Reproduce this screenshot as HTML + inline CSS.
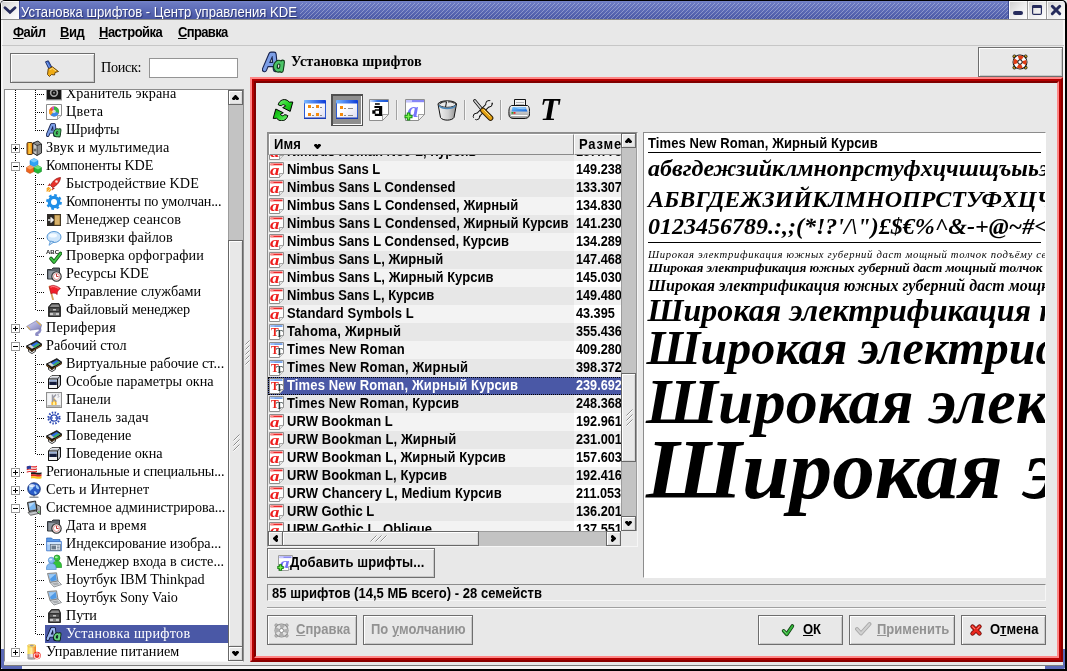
<!DOCTYPE html>
<html lang="ru"><head><meta charset="utf-8"><title>Установка шрифтов - Центр управления KDE</title>
<style>

*{box-sizing:border-box;margin:0;padding:0}
html,body{width:1067px;height:671px;overflow:hidden;background:#e8e8e8}
body{font-family:"Liberation Sans",sans-serif;color:#000;position:relative}
#win{position:absolute;left:0;top:0;width:1067px;height:671px;background:#e8e8e8;overflow:hidden;will-change:transform}
.abs{position:absolute}
.sans{font-family:"Liberation Sans",sans-serif}
.serif{font-family:"Liberation Serif",serif}
.b{font-weight:bold}
.nw{white-space:nowrap}
u{text-decoration:underline;text-underline-offset:1px}
/* title bar */
#tbar{left:1px;top:1px;width:1064px;height:18px;background:linear-gradient(#7685cb,#6a79c1 12%,#5a69b5 55%,#4a58a5)}
#tbar .hatch{left:299px;top:2px;width:708px;height:16px;background:repeating-linear-gradient(135deg,rgba(255,255,255,0) 0,rgba(255,255,255,0) 2.03px,rgba(255,255,255,.3) 2.03px,rgba(255,255,255,.3) 2.828px)}
#ttext{left:20px;top:2px;height:18px;line-height:18px;font-size:14px;color:#fff;transform:scaleX(.9355);transform-origin:0 0;text-shadow:1px 1px 1px rgba(24,32,90,.75)}
.wb{top:0;height:18px;background:linear-gradient(135deg,#cdcdcd,#ececec 50%,#fff);box-shadow:inset 1px 1px 0 #fbfbfb}
/* menubar */
#menu{left:2px;top:20px;width:1062px;height:26px;border-bottom:1px solid #c6c6c6}
#menu span{position:absolute;top:5px;font-size:14px;font-weight:bold;line-height:15px;white-space:nowrap;letter-spacing:-.54px;transform:scaleX(.9286);transform-origin:0 50%}
/* buttons */
.btn{background:#e8e8e8;border:1px solid #6e6e6e;box-shadow:inset 1px 1px 0 #fff, inset -1px -1px 0 #c8c8c8}
.btn .lbl{position:absolute;white-space:nowrap;font-weight:bold;font-size:14px;line-height:15px;transform:scaleX(.9286);transform-origin:0 50%}
.dis{color:#929292}
/* sunken frame */
.sunk{border:1px solid;border-color:#8c8c8c #f6f6f6 #f6f6f6 #8c8c8c}
/* scrollbars */
.sb{background:#c3c3c3;border-left:1px solid #9c9c9c}
.sbtn{background:#e8e8e8;border:1px solid #686868;box-shadow:inset 1px 1px 0 #fff,inset -1px -1px 0 #d8d8d8}
.thumb{background:#e8e8e8;border:1px solid #686868;box-shadow:inset 1px 1px 0 #fff,inset -1px -1px 0 #d8d8d8}
/* tree */
#tree{left:4px;top:89px;width:240px;height:573px;background:#fff;overflow:hidden;border-right-color:#8e8e8e}
#tree .row{position:absolute;left:0;height:18px;width:224px}
#tree .t{position:absolute;top:0;height:18px;line-height:18px;font-family:"Liberation Serif",serif;font-size:14.2px;white-space:nowrap}
.vdot{position:absolute;width:1px;background-image:linear-gradient(#000 50%,rgba(0,0,0,0) 50%);background-size:1px 2px}
.hdot{position:absolute;height:1px;background-image:linear-gradient(90deg,#000 50%,rgba(0,0,0,0) 50%);background-size:2px 1px}
.exp{position:absolute;width:9px;height:9px;border:1px solid #9a9a9a;background:#fff}
.exp i{position:absolute;left:1px;top:3px;width:5px;height:1px;background:#000}
.exp b{position:absolute;left:3px;top:1px;width:1px;height:5px;background:#000}
/* list */
#list{left:267px;top:132px;width:371px;height:415px;background:#fff;overflow:hidden}
.lrow{position:absolute;left:0;height:18px;width:354px}
.lrow .n{position:absolute;left:0;top:0;width:306px;height:18px}
.lrow .s{position:absolute;left:306px;top:0;width:48px;height:18px}
.lrow .tx{position:absolute;top:-1px;height:18px;line-height:18px;font-size:14px;font-weight:bold;white-space:nowrap;transform:scaleX(.9286);transform-origin:0 50%}
.lrow .sz{transform:scaleX(.905)}
.ui{font-size:14px !important;transform:scaleX(.9286);transform-origin:0 50%}
/* preview */
#prev{left:643px;top:132px;width:403px;height:446px;background:#fff;overflow:hidden}
#prev .ln{position:absolute;left:5px;white-space:nowrap;font-family:"Liberation Serif",serif;font-style:italic;font-weight:bold;color:#000}

</style></head>
<body>
<div id="win">
<div class="abs" style="left:0;top:0;width:1067px;height:671px;background:#000;border-radius:5px 5px 0 0"></div><div class="abs" style="left:1px;top:1px;width:1064px;height:668px;background:#f6f6f6;border-radius:4px 4px 0 0"></div><div class="abs" style="left:3px;top:20px;width:1060px;height:645px;background:#e8e8e8"></div><div class="abs" style="left:1px;top:665px;width:1064px;height:1px;background:#7c7c7c"></div><div class="abs" style="left:1px;top:666px;width:1064px;height:3px;background:#f4f4f4"></div><div class="abs" style="left:1px;top:649px;width:3px;height:20px;background:#5b69b6;border-radius:0 0 0 3px"></div><div class="abs" style="left:1px;top:666px;width:21px;height:3px;background:#5b69b6;border-radius:0 0 0 3px"></div><div class="abs" style="left:1063px;top:649px;width:2px;height:20px;background:#5b69b6;border-radius:0 0 2px 0"></div><div class="abs" style="left:1045px;top:666px;width:20px;height:3px;background:#5b69b6;border-radius:0 0 3px 0"></div><div class="abs" style="left:1px;top:19px;width:1064px;height:1px;background:#8c8c8c"></div><div id="tbar" class="abs" style="border-radius:4px 4px 0 0;overflow:hidden"><div class="abs hatch"></div><div class="abs wb" style="left:0;width:18px"><svg class="abs" style="left:2px;top:5px" width="14" height="9" viewBox="0 0 14 9"><path d="M2 1.700 L7 6.300 L12 1.700" fill="none" stroke="#262c5c" stroke-width="2.800" stroke-linecap="round" stroke-linejoin="miter"/></svg></div><div class="abs" style="left:18px;top:0;width:1px;height:18px;background:#3c4a92"></div><div id="ttext" class="abs nw">Установка шрифтов - Центр управления KDE</div><div class="abs" style="left:1007px;top:0;width:1px;height:18px;background:#3c4a92"></div><div class="abs wb" style="left:1008px;width:18px"><svg class="abs" style="left:3px;top:9px" width="12" height="6"><rect x="1" y="1" width="10" height="4" rx="2" fill="#262c5c"/></svg></div><div class="abs" style="left:1026px;top:0;width:1px;height:18px;background:#9a9a9a"></div><div class="abs wb" style="left:1027px;width:18px"><svg class="abs" style="left:3px;top:3px" width="12" height="12"><rect x="1.600" y="1.600" width="8.800" height="8.800" rx="1.200" fill="none" stroke="#262c5c" stroke-width="1.200"/><path d="M1 4 V2.500 Q1 1 2.500 1 H9.500 Q11 1 11 2.500 V4z" fill="#262c5c"/></svg></div><div class="abs" style="left:1045px;top:0;width:1px;height:18px;background:#9a9a9a"></div><div class="abs wb" style="left:1046px;width:18px"><svg class="abs" style="left:3px;top:3px" width="12" height="12"><path d="M2.300 2.300 L9.700 9.700 M9.700 2.300 L2.300 9.700" stroke="#262c5c" stroke-width="3" stroke-linecap="round"/></svg></div></div><div id="menu" class="abs"><span style="left:11px"><u>Ф</u>айл</span><span style="left:58px"><u>В</u>ид</span><span style="left:97px"><u>Н</u>астройка</span><span style="left:176px;letter-spacing:-.7px"><u>С</u>правка</span></div>
<div class="abs btn" style="left:10px;top:53px;width:85px;height:30px"><svg class="abs" style="left:31px;top:6px" width="18" height="18" viewBox="0 0 18 18"><path d="M3.500 1.800 L6.300 .8 L9.800 7.200 L6.800 8.700z" fill="#3e6ad0" stroke="#16265e" stroke-width=".9" stroke-linejoin="round"/><path d="M4.800 2.300 L8 8" stroke="#8ab0f4" stroke-width=".9"/><path d="M6.200 8.800 L10.400 6.800 L16.500 11.500 L13 12.500 L12.500 15 L9.500 14.500 L7.500 16.500 L5.500 14.500z" fill="#f0ac14" stroke="#5e3a04" stroke-width=".9" stroke-linejoin="round"/><path d="M7.500 9.800 L10.500 8.300 L14 11" fill="none" stroke="#fbe08a" stroke-width="1"/></svg></div><div class="abs serif nw" style="left:101px;top:58px;font-size:14.2px;line-height:18px;letter-spacing:-.3px">Поиск:</div><div class="abs" style="left:149px;top:58px;width:89px;height:20px;background:#fff;border:1px solid #949494"></div><div id="tree" class="abs sunk"><div class="vdot" style="left:10px;top:0;height:558px"></div><div class="vdot" style="left:30px;top:0px;height:41px"></div><div class="vdot" style="left:30px;top:85px;height:136px"></div><div class="vdot" style="left:30px;top:265px;height:100px"></div><div class="vdot" style="left:30px;top:427px;height:118px"></div><div class="hdot" style="left:32px;top:4px;width:8px"></div><svg class="abs" style="left:41px;top:-4px" width="16" height="16" viewBox="0 0 16 16"><rect x=".5" y=".5" width="15" height="14" rx="1" fill="#161616" stroke="#9a9a9a" stroke-width="1"/><rect x="1" y="13.500" width="14" height="1.500" fill="#d8d8d8"/><circle cx="8" cy="6.800" r="3.400" fill="none" stroke="#a8a8a8" stroke-width="1.600"/><circle cx="8" cy="6.800" r="1" fill="#8a8a8a"/></svg><div class="t" style="left:61px;top:-6px;letter-spacing:0.113px;">Хранитель экрана</div><div class="hdot" style="left:32px;top:22px;width:8px"></div><svg class="abs" style="left:41px;top:14px" width="16" height="16" viewBox="0 0 16 16"><path d="M.5 .5 H15.500 V11.500 L11.500 15.500 H.5z" fill="#fff" stroke="#8c8c8c"/><path d="M11.500 15.500 V11.500 H15.500" fill="#ececec" stroke="#8c8c8c" stroke-width=".8"/><circle cx="8" cy="7.500" r="5" fill="#f0582a"/><path d="M8 7.500 L8 2.500 A5 5 0 0 1 12.800 9z" fill="#34b848"/><path d="M8 7.500 L12.800 9 A5 5 0 0 1 4.500 11.100z" fill="#3a8ae8"/><path d="M8 7.500 L4.500 11.100 A5 5 0 0 1 3.200 6z" fill="#f8a81c"/><path d="M8 7.500 L5.500 3.200 A5 5 0 0 1 8 2.500z" fill="#c45ad0"/><circle cx="8" cy="7.500" r="1.800" fill="#fff" opacity=".7"/></svg><div class="t" style="left:61px;top:12px;letter-spacing:0.331px;">Цвета</div><div class="hdot" style="left:32px;top:40px;width:8px"></div><svg class="abs" style="left:41px;top:32px" width="16" height="16" viewBox="0 0 24 24"><g fill="none" stroke-linecap="round" stroke-linejoin="round"><path d="M2.500 19.500 L9 4.300 L12 4.300 L13.500 19.500 M6 14.500 H12.500" stroke="#16224e" stroke-width="5.8"/><path d="M2.500 19.500 L9 4.300 L12 4.300 L13.500 19.500 M6 14.500 H12.500" stroke="#7c9ee6" stroke-width="3.200"/><g><ellipse cx="16.600" cy="16.200" rx="3.200" ry="4.100" stroke="#123c1a" stroke-width="5.2" transform="rotate(14 16.600 16.200)"/><path d="M20.600 12 L19.400 20.500" stroke="#123c1a" stroke-width="5.2"/><ellipse cx="16.600" cy="16.200" rx="3.200" ry="4.100" stroke="#4cc468" stroke-width="2.600" transform="rotate(14 16.600 16.200)"/><path d="M20.600 12 L19.400 20.500" stroke="#4cc468" stroke-width="2.600"/></g></g></svg><div class="t" style="left:61px;top:30px;letter-spacing:-0.056px;">Шрифты</div><div class="hdot" style="left:16px;top:58px;width:4px"></div><div class="exp" style="left:6px;top:54px"><i></i><b></b></div><svg class="abs" style="left:21px;top:50px" width="16" height="16" viewBox="0 0 16 16"><defs><linearGradient id="sg" x1="0" x2="1"><stop offset="0" stop-color="#e8740c"/><stop offset=".5" stop-color="#fcd040"/><stop offset="1" stop-color="#e06a08"/></linearGradient></defs><path d="M7 3 L12 1 L15.500 4 V13 L11 15.500 L7 13z" fill="#8e8e8e" stroke="#1a1a1a" stroke-width=".9"/><path d="M7 3 L11 5.500 L15.500 4 M11 5.500 V15.500" fill="none" stroke="#1a1a1a" stroke-width=".7"/><path d="M7.500 4 L10.500 6 V14.500 L7.500 12.500z" fill="#c9c9c9"/><circle cx="9" cy="10" r="1.500" fill="#6a6a6a"/><rect x="1" y="2.500" width="5.500" height="12" rx="1.200" fill="url(#sg)" stroke="#3a2206" stroke-width=".9"/></svg><div class="t" style="left:41px;top:48px;letter-spacing:0.169px">Звук и мультимедиа</div><div class="hdot" style="left:16px;top:76px;width:4px"></div><div class="exp" style="left:6px;top:72px"><i></i></div><svg class="abs" style="left:21px;top:68px" width="16" height="16" viewBox="0 0 16 16"><path d="M8 .5 L12 2.500 L12 6.500 L8 8.500 L4 6.500 L4 2.500z" fill="#2fa4f6" stroke="#1670c4" stroke-width=".5"/><path d="M8 .5 L12 2.500 L8 4.500 L4 2.500z" fill="#7accff"/><path d="M4 7.500 L8 9.500 L8 13.500 L4 15.500 L0.500 13.500 L0.500 9.500z" fill="#f0641c" stroke="#b0400a" stroke-width=".5"/><path d="M4 7.500 L8 9.500 L4 11.500 L.5 9.500z" fill="#fca060"/><path d="M12 7.500 L15.500 9.500 L15.500 13.500 L12 15.500 L8 13.500 L8 9.500z" fill="#22b834" stroke="#0e7a1c" stroke-width=".5"/><path d="M12 7.500 L15.500 9.500 L12 11.500 L8 9.500z" fill="#6ee47a"/></svg><div class="t" style="left:41px;top:66px;letter-spacing:-0.141px">Компоненты KDE</div><div class="hdot" style="left:32px;top:94px;width:8px"></div><svg class="abs" style="left:41px;top:86px" width="16" height="16" viewBox="0 0 16 16"><path d="M14.5 1.5 C10 2 6.5 5 4.5 9.5 L6.5 11.5 C11 9.5 14 6 14.5 1.5z" fill="#e8322a" stroke="#8a120e" stroke-width=".7"/><path d="M4.5 9.500 L1.5 10 L4 7z M6.500 11.5 L6 14.5 L9 12z" fill="#b81c16"/><path d="M4 12 L1 15 M5 13.500 L3 15.5 M2.5 11.5 L1 13" stroke="#f6a21c" stroke-width="1.2" stroke-linecap="round"/><circle cx="10.5" cy="5.5" r="1.3" fill="#fde3de"/></svg><div class="t" style="left:61px;top:84px;letter-spacing:0.104px;">Быстродействие KDE</div><div class="hdot" style="left:32px;top:112px;width:8px"></div><svg class="abs" style="left:41px;top:104px" width="16" height="16" viewBox="0 0 16 16"><circle cx="8" cy="8" r="4.6" fill="none" stroke="#1f8fe8" stroke-width="3.4"/><circle cx="8" cy="8" r="6.8" fill="none" stroke="#1f8fe8" stroke-width="2.2" stroke-dasharray="2.67 2.67"/><circle cx="8" cy="8" r="2.6" fill="#fff"/></svg><div class="t" style="left:61px;top:102px;letter-spacing:-0.187px;">Компоненты по умолчан...</div><div class="hdot" style="left:32px;top:130px;width:8px"></div><svg class="abs" style="left:41px;top:122px" width="16" height="16" viewBox="0 0 16 16"><rect x="1" y="2" width="14" height="12" fill="#2e2a26"/><rect x="8.5" y="3" width="5.5" height="10" fill="#d9b36c" stroke="#7a5a1e" stroke-width=".6"/><path d="M2 8 h4 M4.500 5.500 L7 8 L4.500 10.500" fill="none" stroke="#f2f2f2" stroke-width="1.6"/></svg><div class="t" style="left:61px;top:120px;letter-spacing:0.117px;">Менеджер сеансов</div><div class="hdot" style="left:32px;top:148px;width:8px"></div><svg class="abs" style="left:41px;top:140px" width="16" height="16" viewBox="0 0 16 16"><ellipse cx="8" cy="7" rx="7" ry="5.500" fill="#cfe6fb" stroke="#5a9ad6" stroke-width="1"/><path d="M4.500 11 L3 15.300 L8 12z" fill="#cfe6fb" stroke="#5a9ad6" stroke-width=".9"/><ellipse cx="7" cy="5.500" rx="4" ry="2" fill="#f3faff"/></svg><div class="t" style="left:61px;top:138px;letter-spacing:0.082px;">Привязки файлов</div><div class="hdot" style="left:32px;top:166px;width:8px"></div><svg class="abs" style="left:41px;top:158px" width="16" height="16" viewBox="0 0 16 16"><text x="0" y="6" font-family="Liberation Sans,sans-serif" font-weight="bold" font-size="6" fill="#222">ABC</text><path d="M5 10.500 L8 14 L14.500 5.500" fill="none" stroke="#155a18" stroke-width="3.6" stroke-linecap="round" stroke-linejoin="round"/><path d="M5 10.500 L8 14 L14.500 5.500" fill="none" stroke="#3ec744" stroke-width="1.900" stroke-linecap="round" stroke-linejoin="round"/></svg><div class="t" style="left:61px;top:156px;letter-spacing:0.156px;">Проверка орфографии</div><div class="hdot" style="left:32px;top:184px;width:8px"></div><svg class="abs" style="left:41px;top:176px" width="16" height="16" viewBox="0 0 16 16"><path d="M1.500 3.500 h4 l1.500 -1.500 h6.500 v11 h-12z" fill="#5d646c" stroke="#23272b" stroke-width=".9"/><rect x="2.500" y="5" width="10" height="7.500" fill="#8f98a1"/><circle cx="10.500" cy="10.500" r="4.700" fill="#e9e9e9" stroke="#2b2b2b" stroke-width="1.100"/><circle cx="10.500" cy="10.500" r="3" fill="#fff" stroke="#c44" stroke-width=".5"/><path d="M10.500 8 V10.500 H12.500" fill="none" stroke="#c02020" stroke-width=".9"/></svg><div class="t" style="left:61px;top:174px;letter-spacing:-0.035px;">Ресурсы KDE</div><div class="hdot" style="left:32px;top:202px;width:8px"></div><svg class="abs" style="left:41px;top:194px" width="16" height="16" viewBox="0 0 16 16"><path d="M3.500 2.500 L7 15.500" stroke="#d2a05a" stroke-width="1.800" stroke-linecap="round"/><path d="M3.300 2.800 C6 .5 9.500 1 14.500 4.500 C12 6 11 8 11.200 10.500 C9 8.800 6.800 8.800 5 9.800z" fill="#f0202a" stroke="#a8101a" stroke-width=".6"/><path d="M4.500 3.200 C7 2 9.500 2.500 12.500 4.500" stroke="#ff8a90" stroke-width="1" fill="none"/></svg><div class="t" style="left:61px;top:192px;letter-spacing:0.022px;">Управление службами</div><div class="hdot" style="left:32px;top:220px;width:8px"></div><svg class="abs" style="left:41px;top:212px" width="16" height="16" viewBox="0 0 16 16"><path d="M2.500 5 L5.500 1.500 H13 L14.500 5 V14.500 H2.500z" fill="#3a3a3a" stroke="#111" stroke-width=".8"/><path d="M5.800 2.500 H12.500 L13.400 5 H3.800z" fill="#8c8c8c"/><rect x="3.500" y="6" width="10" height="3.600" fill="#5a5a5a" stroke="#1a1a1a" stroke-width=".5"/><rect x="3.500" y="10.200" width="10" height="3.600" fill="#c8c8c8" stroke="#1a1a1a" stroke-width=".5"/><rect x="7" y="7.200" width="3" height="1.200" fill="#ddd"/><rect x="7" y="11.400" width="3" height="1.200" fill="#555"/></svg><div class="t" style="left:61px;top:210px;letter-spacing:-0.109px;">Файловый менеджер</div><div class="hdot" style="left:16px;top:238px;width:4px"></div><div class="exp" style="left:6px;top:234px"><i></i><b></b></div><svg class="abs" style="left:21px;top:230px" width="16" height="16" viewBox="0 0 16 16"><defs><linearGradient id="ug" x1="0" y1="0" x2="1" y2="1"><stop offset="0" stop-color="#dcdcf6"/><stop offset=".6" stop-color="#a2a2d2"/><stop offset="1" stop-color="#7c7cb4"/></linearGradient></defs><path d="M12.500 7.500 C15 9 14.500 12 11.500 13 C10 13.500 10 15 11.500 15.300" fill="none" stroke="#8c8cc4" stroke-width="2.600" stroke-linecap="round"/><path d="M.6 6.400 L10.600 .6 L15.600 4.800 L14.600 8.800 L4 10.200z" fill="url(#ug)" stroke="#7474a8" stroke-width=".6" stroke-linejoin="round"/><path d="M10.600 .8 L15.400 4.800 L14.800 6 L10 1.600z M.8 6.600 L3.800 9.800 L4.600 9 L1.800 6.200z" fill="#e0b44a"/></svg><div class="t" style="left:41px;top:228px;letter-spacing:0.218px">Периферия</div><div class="hdot" style="left:16px;top:256px;width:4px"></div><div class="exp" style="left:6px;top:252px"><i></i></div><svg class="abs" style="left:21px;top:248px" width="16" height="16" viewBox="0 0 16 16"><path d="M2.500 10.500 L6 12.500 L9.500 10.300 V13.300 L6 15.600 L2.500 13.500z" fill="#f4f4f4" stroke="#111" stroke-width=".8" stroke-linejoin="round"/><path d="M.6 8.300 L5.900 12 V13.600 L.6 9.900z M5.900 12 L15.600 6.300 V7.900 L5.900 13.600z" fill="#9a6422" stroke="#1a1004" stroke-width=".7" stroke-linejoin="round"/><path d="M.5 8 L10.800 2.600 L15.700 6.100 L5.900 12z" fill="#2a2a2a" stroke="#000" stroke-width=".8" stroke-linejoin="round"/><path d="M4.500 7.600 L10.700 4 L14.300 6.300 L8.300 10z" fill="#2e6ee8"/><path d="M6.500 8.900 L12.300 5.200 L14.300 6.300 L8.300 10z" fill="#44b05c"/><path d="M2 8 L4.500 6.600 L8 9.500 L6 10.800z" fill="#d8d8d8"/></svg><div class="t" style="left:41px;top:246px;letter-spacing:0.025px">Рабочий стол</div><div class="hdot" style="left:32px;top:274px;width:8px"></div><svg class="abs" style="left:41px;top:266px" width="16" height="16" viewBox="0 0 16 16"><path d="M2.500 10.500 L6 12.500 L9.500 10.300 V13.300 L6 15.600 L2.500 13.500z" fill="#f4f4f4" stroke="#111" stroke-width=".8" stroke-linejoin="round"/><path d="M.6 8.300 L5.900 12 V13.600 L.6 9.900z M5.900 12 L15.600 6.300 V7.900 L5.900 13.600z" fill="#9a6422" stroke="#1a1004" stroke-width=".7" stroke-linejoin="round"/><path d="M.5 8 L10.800 2.600 L15.700 6.100 L5.900 12z" fill="#2a2a2a" stroke="#000" stroke-width=".8" stroke-linejoin="round"/><path d="M4.500 7.600 L10.700 4 L14.300 6.300 L8.300 10z" fill="#2e6ee8"/><path d="M6.500 8.900 L12.300 5.200 L14.300 6.300 L8.300 10z" fill="#44b05c"/><path d="M2 8 L4.500 6.600 L8 9.500 L6 10.800z" fill="#d8d8d8"/></svg><div class="t" style="left:61px;top:264px;letter-spacing:0.016px;">Виртуальные рабочие ст...</div><div class="hdot" style="left:32px;top:292px;width:8px"></div><svg class="abs" style="left:41px;top:284px" width="16" height="16" viewBox="0 0 16 16"><path d="M2.500 5 L6 1.500 H14.500 V11 L11.500 14.500 H2.500z" fill="#c4c8ce" stroke="#111" stroke-width="1" stroke-linejoin="round"/><path d="M2.500 5 H11.500 V14.500 H2.500z" fill="#f2f2f2" stroke="#111" stroke-width="1"/><path d="M11.500 5 L14.500 1.500" stroke="#111" stroke-width=".8"/><rect x="3.300" y="7.500" width="7.500" height="3.500" fill="#141c3c"/><path d="M3.300 5.800 H10.800 V7.500 H3.300z" fill="#9ab0d8"/><path d="M4 3.800 L6.500 2.200 H13" stroke="#fff" stroke-width=".9" fill="none"/></svg><div class="t" style="left:61px;top:282px;letter-spacing:0.023px;">Особые параметры окна</div><div class="hdot" style="left:32px;top:310px;width:8px"></div><svg class="abs" style="left:41px;top:302px" width="16" height="16" viewBox="0 0 16 16"><rect x=".5" y=".5" width="15" height="15" fill="#e6e6e6" stroke="#8e8e8e"/><rect x="1.500" y="1.500" width="13" height="11.500" fill="#f4f5f7"/><path d="M8 6 C10 8 11 10 10.500 13 H5.500 C5 10 6 8 8 6z" fill="#f8b020"/><path d="M8 8.500 C9 10 9.500 11.500 9.200 13 H6.800 C6.500 11.500 7 10 8 8.500z" fill="#fff2a0"/><path d="M6.500 2.500 V10 M6.500 6.500 L10 2.500 M6.500 6.500 L10.500 9.500" stroke="#9a9aa4" stroke-width="1.500" fill="none"/><path d="M11 2 L13.500 5 M12.800 1.500 L12 6" stroke="#c4c4cc" stroke-width="1"/><rect x="1.500" y="13.200" width="13" height="1.500" fill="#a8a8a8"/></svg><div class="t" style="left:61px;top:300px;letter-spacing:-0.035px;">Панели</div><div class="hdot" style="left:32px;top:328px;width:8px"></div><svg class="abs" style="left:41px;top:320px" width="16" height="16" viewBox="0 0 16 16"><circle cx="8" cy="8" r="3.200" fill="none" stroke="#2a48b4" stroke-width="1.300"/><circle cx="8" cy="8" r="5.600" fill="none" stroke="#2a48b4" stroke-width="2" stroke-dasharray="1.460 1.470"/><path d="M2 8 H14" stroke="#2a48b4" stroke-width="1.100"/><circle cx="8" cy="8" r="1.200" fill="#fff"/></svg><div class="t" style="left:61px;top:318px;letter-spacing:0.274px;">Панель задач</div><div class="hdot" style="left:32px;top:346px;width:8px"></div><svg class="abs" style="left:41px;top:338px" width="16" height="16" viewBox="0 0 16 16"><path d="M2.500 10.500 L6 12.500 L9.500 10.300 V13.300 L6 15.600 L2.500 13.500z" fill="#f4f4f4" stroke="#111" stroke-width=".8" stroke-linejoin="round"/><path d="M.6 8.300 L5.900 12 V13.600 L.6 9.900z M5.900 12 L15.600 6.300 V7.900 L5.900 13.600z" fill="#9a6422" stroke="#1a1004" stroke-width=".7" stroke-linejoin="round"/><path d="M.5 8 L10.800 2.600 L15.700 6.100 L5.900 12z" fill="#2a2a2a" stroke="#000" stroke-width=".8" stroke-linejoin="round"/><path d="M4.500 7.600 L10.700 4 L14.300 6.300 L8.300 10z" fill="#2e6ee8"/><path d="M6.500 8.900 L12.300 5.200 L14.300 6.300 L8.300 10z" fill="#44b05c"/><path d="M2 8 L4.500 6.600 L8 9.500 L6 10.800z" fill="#d8d8d8"/></svg><div class="t" style="left:61px;top:336px;letter-spacing:0.036px;">Поведение</div><div class="hdot" style="left:32px;top:364px;width:8px"></div><svg class="abs" style="left:41px;top:356px" width="16" height="16" viewBox="0 0 16 16"><path d="M2.500 5 L6 1.500 H14.500 V11 L11.500 14.500 H2.500z" fill="#c4c8ce" stroke="#111" stroke-width="1" stroke-linejoin="round"/><path d="M2.500 5 H11.500 V14.500 H2.500z" fill="#f2f2f2" stroke="#111" stroke-width="1"/><path d="M11.500 5 L14.500 1.500" stroke="#111" stroke-width=".8"/><rect x="3.300" y="7.500" width="7.500" height="3.500" fill="#141c3c"/><path d="M3.300 5.800 H10.800 V7.500 H3.300z" fill="#9ab0d8"/><path d="M4 3.800 L6.500 2.200 H13" stroke="#fff" stroke-width=".9" fill="none"/></svg><div class="t" style="left:61px;top:354px;letter-spacing:0.014px;">Поведение окна</div><div class="hdot" style="left:16px;top:382px;width:4px"></div><div class="exp" style="left:6px;top:378px"><i></i><b></b></div><svg class="abs" style="left:21px;top:374px" width="16" height="16" viewBox="0 0 16 16"><path d="M.8 2.500 C4 .8 7 3.300 11 1.800 V8 C7 9.500 4 7 .8 8.700z" fill="#f4f4f4"/><path d="M.8 2.500 C4 .8 7 3.300 11 1.800 V3 C7 4.500 4 2 .8 3.700z M.8 5 C4 3.300 7 5.800 11 4.300 V5.500 C7 7 4 4.500 .8 6.200z M.8 7.500 C4 5.800 7 8.300 11 6.800 V8 C7 9.500 4 7 .8 8.700z" fill="#e6282a"/><path d="M.8 2.500 C2.500 1.600 4 1.700 5 2 V5 C4 4.600 2.500 4.700 .8 5.300z" fill="#2a3c9a"/><path d="M5 8.500 C8 7.300 11.500 9.800 15.500 8.300 V10.300 C11.500 11.800 8 9.300 5 10.500z" fill="#1a1a1a"/><path d="M5 10.500 C8 9.300 11.500 11.800 15.500 10.300 V12.300 C11.500 13.800 8 11.300 5 12.500z" fill="#e0241e"/><path d="M5 12.500 C8 11.300 11.500 13.800 15.500 12.300 V14.300 C11.500 15.800 8 13.300 5 14.500z" fill="#f8c41a"/></svg><div class="t" style="left:41px;top:372px;letter-spacing:-0.178px">Региональные и специальны...</div><div class="hdot" style="left:16px;top:400px;width:4px"></div><div class="exp" style="left:6px;top:396px"><i></i><b></b></div><svg class="abs" style="left:21px;top:392px" width="16" height="16" viewBox="0 0 16 16"><path d="M4 15.300 H12 M8 13 V15" stroke="#8e949c" stroke-width="1.400" stroke-linecap="round"/><circle cx="8" cy="7" r="6.300" fill="#2a5cc8" stroke="#122a66" stroke-width=".8"/><path d="M3.500 3.800 C5 2.800 7 3.300 7.500 5.300 C7 7.300 5 7.300 4 9.300 C3 7.800 2.500 5.800 3.500 3.800z M9.500 2.800 C11.500 2.800 13 4.800 13.200 6.800 C12 7.800 10.500 6.800 10 5.300z M8 9.300 C9.500 8.800 11 9.800 10.500 11.800 C9.500 12.800 8 11.800 8 9.300z" fill="#9ccaf8"/><ellipse cx="6" cy="3.600" rx="3" ry="1.700" fill="#fff" opacity=".75"/></svg><div class="t" style="left:41px;top:390px;letter-spacing:0.172px">Сеть и Интернет</div><div class="hdot" style="left:16px;top:418px;width:4px"></div><div class="exp" style="left:6px;top:414px"><i></i></div><svg class="abs" style="left:21px;top:410px" width="16" height="16" viewBox="0 0 16 16"><path d="M10.500 4.500 L14.500 6.500 V14.500 L10.500 12.500z" fill="#a8acb0" stroke="#222" stroke-width=".8" stroke-linejoin="round"/><circle cx="13" cy="12" r=".8" fill="#3c3"/><path d="M1.500 2.500 L9.500 1 L11 10 L3 11.500z" fill="#8e9296" stroke="#1a1a1a" stroke-width=".9" stroke-linejoin="round"/><path d="M2.800 3.500 L8.700 2.400 L9.800 9 L3.900 10.200z" fill="#7ab8f2"/><path d="M2.800 3.500 L8.700 2.400 L3.500 7.500z" fill="#b4dafc"/><path d="M2 12.500 L10 11 L12.500 13.500 L4.500 15.300z" fill="#c4c8cc" stroke="#333" stroke-width=".7" stroke-linejoin="round"/></svg><div class="t" style="left:41px;top:408px;letter-spacing:-0.015px">Системное администрирова...</div><div class="hdot" style="left:32px;top:436px;width:8px"></div><svg class="abs" style="left:41px;top:428px" width="16" height="16" viewBox="0 0 16 16"><path d="M1.500 3.500 h4 l1.500 -1.500 h6.500 v11 h-12z" fill="#5d646c" stroke="#23272b" stroke-width=".9"/><rect x="2.500" y="5" width="10" height="7.500" fill="#8f98a1"/><circle cx="10.500" cy="10.500" r="4.700" fill="#e9e9e9" stroke="#2b2b2b" stroke-width="1.100"/><circle cx="10.500" cy="10.500" r="3" fill="#fff" stroke="#c44" stroke-width=".5"/><path d="M10.500 8 V10.500 H12.500" fill="none" stroke="#c02020" stroke-width=".9"/></svg><div class="t" style="left:61px;top:426px;letter-spacing:0.17px;">Дата и время</div><div class="hdot" style="left:32px;top:454px;width:8px"></div><svg class="abs" style="left:41px;top:446px" width="16" height="16" viewBox="0 0 16 16"><path d="M.6 2 H5.500 L7 3.500 H14 V6 H.6z" fill="#5a9ae8" stroke="#2a62b8" stroke-width=".7"/><path d="M.6 5.500 H15.400 V14.800 H.6z" fill="#a6ccf8" stroke="#3a72c8" stroke-width=".8"/><path d="M1.300 6.200 H14.700 V8.500 H1.300z" fill="#d2e6fc"/><rect x="4.500" y="8.500" width="10" height="6" fill="#dfe6ee" stroke="#4a5a6a" stroke-width=".6"/><rect x="5.500" y="9.600" width="4.500" height="3.800" fill="#6a7a8a"/><path d="M11 10 h2.500 M11 11.500 h2.500 M11 13 h2.500" stroke="#6a7a8a" stroke-width=".7"/></svg><div class="t" style="left:61px;top:444px;letter-spacing:0.001px;">Индексирование изобра...</div><div class="hdot" style="left:32px;top:472px;width:8px"></div><svg class="abs" style="left:41px;top:464px" width="16" height="16" viewBox="0 0 16 16"><circle cx="11" cy="4" r="3" fill="#34c43a" stroke="#168a1e" stroke-width=".6"/><path d="M6.200 13.500 C6.200 8.500 8 7.200 11 7.200 C14 7.200 15.700 8.500 15.700 13.500z" fill="#34c43a" stroke="#168a1e" stroke-width=".6"/><ellipse cx="10.300" cy="3.200" rx="1.500" ry="1" fill="#a4f0a8"/><circle cx="5.300" cy="6.300" r="3" fill="#86bcf2" stroke="#3c80c8" stroke-width=".6"/><path d="M.4 15.600 C.4 10.800 2 9.500 5.300 9.500 C8.600 9.500 10.200 10.800 10.200 15.600z" fill="#86bcf2" stroke="#3c80c8" stroke-width=".6"/><ellipse cx="4.600" cy="5.400" rx="1.500" ry="1" fill="#d6ecff"/></svg><div class="t" style="left:61px;top:462px;letter-spacing:0.057px;">Менеджер входа в систе...</div><div class="hdot" style="left:32px;top:490px;width:8px"></div><svg class="abs" style="left:41px;top:482px" width="16" height="16" viewBox="0 0 16 16"><path d="M1.500 1.500 L10.500 .8 L12 9 L4 10.500z" fill="#c4c8cc" stroke="#6a6e72" stroke-width=".8"/><path d="M2.800 2.500 L9.700 2 L10.800 8.300 L4.700 9.400z" fill="#4f9ae6"/><path d="M2.800 2.500 L9.700 2 L4 7z" fill="#9ccaf6"/><path d="M4 10.500 L12 9 L15.500 12.500 L8 15z" fill="#e2e4e6" stroke="#7a7e82" stroke-width=".8"/><path d="M6 11.300 L11.500 10.200 L13.500 12.200 L8.500 13.500z" fill="#a9adb1"/></svg><div class="t" style="left:61px;top:480px;letter-spacing:-0.004px;">Ноутбук IBM Thinkpad</div><div class="hdot" style="left:32px;top:508px;width:8px"></div><svg class="abs" style="left:41px;top:500px" width="16" height="16" viewBox="0 0 16 16"><path d="M1.500 1.500 L10.500 .8 L12 9 L4 10.500z" fill="#c4c8cc" stroke="#6a6e72" stroke-width=".8"/><path d="M2.800 2.500 L9.700 2 L10.800 8.300 L4.700 9.400z" fill="#4f9ae6"/><path d="M2.800 2.500 L9.700 2 L4 7z" fill="#9ccaf6"/><path d="M4 10.500 L12 9 L15.500 12.500 L8 15z" fill="#e2e4e6" stroke="#7a7e82" stroke-width=".8"/><path d="M6 11.300 L11.500 10.200 L13.500 12.200 L8.500 13.500z" fill="#a9adb1"/></svg><div class="t" style="left:61px;top:498px;letter-spacing:-0.052px;">Ноутбук Sony Vaio</div><div class="hdot" style="left:32px;top:526px;width:8px"></div><svg class="abs" style="left:41px;top:518px" width="16" height="16" viewBox="0 0 16 16"><path d="M2.500 5 L5.500 1.500 H13 L14.500 5 V14.500 H2.500z" fill="#3a3a3a" stroke="#111" stroke-width=".8"/><path d="M5.800 2.500 H12.500 L13.400 5 H3.800z" fill="#8c8c8c"/><rect x="3.500" y="6" width="10" height="3.600" fill="#5a5a5a" stroke="#1a1a1a" stroke-width=".5"/><rect x="3.500" y="10.200" width="10" height="3.600" fill="#c8c8c8" stroke="#1a1a1a" stroke-width=".5"/><rect x="7" y="7.200" width="3" height="1.200" fill="#ddd"/><rect x="7" y="11.400" width="3" height="1.200" fill="#555"/></svg><div class="t" style="left:61px;top:516px;letter-spacing:-0.085px;">Пути</div><div class="hdot" style="left:32px;top:544px;width:8px"></div><div class="abs" style="left:40px;top:535px;width:184px;height:18px;background:#4a58a6"></div><svg class="abs" style="left:41px;top:536px" width="16" height="16" viewBox="0 0 24 24"><g fill="none" stroke-linecap="round" stroke-linejoin="round"><path d="M2.500 19.500 L9 4.300 L12 4.300 L13.500 19.500 M6 14.500 H12.500" stroke="#0c1434" stroke-width="5.8"/><path d="M2.500 19.500 L9 4.300 L12 4.300 L13.500 19.500 M6 14.500 H12.500" stroke="#9cb8f0" stroke-width="3.200"/><g><ellipse cx="16.600" cy="16.200" rx="3.200" ry="4.100" stroke="#0a2410" stroke-width="5.2" transform="rotate(14 16.600 16.200)"/><path d="M20.600 12 L19.400 20.500" stroke="#0a2410" stroke-width="5.2"/><ellipse cx="16.600" cy="16.200" rx="3.200" ry="4.100" stroke="#68d480" stroke-width="2.600" transform="rotate(14 16.600 16.200)"/><path d="M20.600 12 L19.400 20.500" stroke="#68d480" stroke-width="2.600"/></g></g></svg><div class="t" style="left:61px;top:534px;letter-spacing:0.269px;color:#fff">Установка шрифтов</div><div class="hdot" style="left:16px;top:562px;width:4px"></div><div class="exp" style="left:6px;top:558px"><i></i><b></b></div><svg class="abs" style="left:21px;top:554px" width="16" height="16" viewBox="0 0 16 16"><defs><linearGradient id="pg" x1="0" x2="1"><stop offset="0" stop-color="#f7d63a"/><stop offset=".45" stop-color="#fdf0a0"/><stop offset="1" stop-color="#f0781c"/></linearGradient><linearGradient id="pg2" x1="0" x2="1"><stop offset="0" stop-color="#9a9a9a"/><stop offset=".5" stop-color="#f0f0f0"/><stop offset="1" stop-color="#8a8a8a"/></linearGradient></defs><rect x="1.500" y="1.500" width="8.500" height="9" fill="url(#pg)"/><rect x="1.500" y="10" width="8.500" height="4.500" fill="url(#pg2)"/><ellipse cx="5.750" cy="1.800" rx="4.250" ry="1.300" fill="#fbe28a" stroke="#d9a21c" stroke-width=".5"/><ellipse cx="5.750" cy="1.600" rx="2" ry=".8" fill="#9a9a9a"/><ellipse cx="5.750" cy="14.500" rx="4.250" ry="1.200" fill="#a4a4a4"/><circle cx="11" cy="11.500" r="3.800" fill="#ee2a22"/><path d="M9.500 9.500 A2.800 2.800 0 1 0 12.500 9.500 M11 8.300 V11.500" stroke="#ffe4e0" stroke-width="1.100" fill="none"/></svg><div class="t" style="left:41px;top:552px;letter-spacing:0.015px">Управление питанием</div><div class="abs sb" style="left:223px;top:0;width:15px;height:571px"></div><div class="abs sbtn" style="left:223px;top:0;width:15px;height:15px"><svg class="abs" style="left:3.0px;top:4.0px" width="7.2" height="5.2"><path d="M0 1 L1 0 L2.600 0 L3.500 1 L4.400 0 L6 0 L7 1 L7 1.800 L4 5 L3 5 L0 1.800Z" fill="#000" transform="translate(0 5) scale(1 -1)"/></svg></div><div class="abs sbtn" style="left:223px;top:556px;width:15px;height:15px"><svg class="abs" style="left:3.0px;top:4.0px" width="7.2" height="5.2"><path d="M0 1 L1 0 L2.600 0 L3.500 1 L4.400 0 L6 0 L7 1 L7 1.800 L4 5 L3 5 L0 1.800Z" fill="#000"/></svg></div><div class="abs thumb" style="left:223px;top:150px;width:15px;height:407px"><svg class="abs" style="left:4px;top:193px" width="8" height="18"><path d="M0.5 7.5 l6 -6" stroke="#fff" stroke-width="1"/><path d="M0.5 6.5 l6 -6" stroke="#8e8e8e" stroke-width="1"/><path d="M0.5 12.5 l6 -6" stroke="#fff" stroke-width="1"/><path d="M0.5 11.5 l6 -6" stroke="#8e8e8e" stroke-width="1"/><path d="M0.5 17.5 l6 -6" stroke="#fff" stroke-width="1"/><path d="M0.5 16.5 l6 -6" stroke="#8e8e8e" stroke-width="1"/></svg></div></div><div class="abs" style="left:245px;top:340px;width:5px;height:28px;overflow:hidden"><svg class="abs" style="left:0px;top:0px" width="6" height="26"><path d="M0.5 5.5 l4 -4" stroke="#fff" stroke-width="1"/><path d="M0.5 4.5 l4 -4" stroke="#8e8e8e" stroke-width="1"/><path d="M0.5 10.5 l4 -4" stroke="#fff" stroke-width="1"/><path d="M0.5 9.5 l4 -4" stroke="#8e8e8e" stroke-width="1"/><path d="M0.5 15.5 l4 -4" stroke="#fff" stroke-width="1"/><path d="M0.5 14.5 l4 -4" stroke="#8e8e8e" stroke-width="1"/><path d="M0.5 20.5 l4 -4" stroke="#fff" stroke-width="1"/><path d="M0.5 19.5 l4 -4" stroke="#8e8e8e" stroke-width="1"/><path d="M0.5 25.5 l4 -4" stroke="#fff" stroke-width="1"/><path d="M0.5 24.5 l4 -4" stroke="#8e8e8e" stroke-width="1"/></svg></div>
<svg class="abs" style="left:262px;top:50px" width="24" height="24" viewBox="0 0 24 24"><g fill="none" stroke-linecap="round" stroke-linejoin="round"><path d="M2.500 19.500 L9 4.300 L12 4.300 L13.500 19.500 M6 14.500 H12.500" stroke="#16224e" stroke-width="5.4"/><path d="M2.500 19.500 L9 4.300 L12 4.300 L13.500 19.500 M6 14.500 H12.500" stroke="#7c9ee6" stroke-width="3.200"/><g><ellipse cx="16.600" cy="16.200" rx="3.200" ry="4.100" stroke="#123c1a" stroke-width="4.8" transform="rotate(14 16.600 16.200)"/><path d="M20.600 12 L19.400 20.500" stroke="#123c1a" stroke-width="4.8"/><ellipse cx="16.600" cy="16.200" rx="3.200" ry="4.100" stroke="#4cc468" stroke-width="2.600" transform="rotate(14 16.600 16.200)"/><path d="M20.600 12 L19.400 20.500" stroke="#4cc468" stroke-width="2.600"/></g></g></svg><div class="abs serif b nw" style="left:291px;top:52px;font-size:14.3px;line-height:18px">Установка шрифтов</div><div class="abs btn" style="left:978px;top:47px;width:85px;height:30px"><svg class="abs" style="left:32.5px;top:6px" width="16" height="16" viewBox="0 0 16 16"><circle cx="2.4" cy="2.4" r="1.500" fill="#d4a814" stroke="#111" stroke-width=".8"/><circle cx="2.4" cy="13.6" r="1.500" fill="#d4a814" stroke="#111" stroke-width=".8"/><circle cx="13.6" cy="2.4" r="1.500" fill="#d4a814" stroke="#111" stroke-width=".8"/><circle cx="13.6" cy="13.6" r="1.500" fill="#d4a814" stroke="#111" stroke-width=".8"/><circle cx="8" cy="8" r="7.500" fill="#111"/><circle cx="8" cy="8" r="4.400" fill="none" stroke="#fbfbfb" stroke-width="4.200"/><circle cx="8" cy="8" r="4.400" fill="none" stroke="#e03c14" stroke-width="4.200" stroke-dasharray="4.285 2.626" stroke-dashoffset="2.143"/><circle cx="8" cy="8" r="2.200" fill="#fff" stroke="#111" stroke-width="1"/></svg></div><div class="abs" style="left:250px;top:77px;width:813px;height:585px;border:2px solid;border-color:#ff8686 #8a0000 #8a0000 #ff8686"></div><div class="abs" style="left:252px;top:79px;width:809px;height:581px;border:2px solid #b40000"></div><div class="abs" style="left:254px;top:81px;width:805px;height:577px;border:2px solid;border-color:#800000 #ff8686 #ff8686 #800000"></div><svg class="abs" style="left:272px;top:99px" width="22" height="22" viewBox="0 0 22 22"><defs><linearGradient id="rg" x1="0" y1="0" x2="1" y2="1"><stop offset="0" stop-color="#7df07d"/><stop offset=".5" stop-color="#22d422"/><stop offset="1" stop-color="#0aa00a"/></linearGradient></defs><path d="M6.200 5.900 C7 .8 13.500 -1.600 17.300 3.100 L20.800 3 L18.200 12.400 L10.700 8.600 L13.600 7.200 C12.600 5.200 10.600 5.200 9.700 6.600 C8.500 6.800 7.300 6.500 6.300 5.800Z" fill="url(#rg)" stroke="#000" stroke-width="1" stroke-linejoin="round"/><path d="M6.200 5.900 C7 .8 13.500 -1.600 17.300 3.100 L20.800 3 L18.200 12.400 L10.700 8.600 L13.600 7.200 C12.600 5.200 10.600 5.200 9.700 6.600 C8.500 6.800 7.300 6.500 6.300 5.800Z" fill="url(#rg)" stroke="#000" stroke-width="1" stroke-linejoin="round" transform="rotate(180 11 11.200)"/></svg><svg class="abs" style="left:304px;top:99px" width="22" height="22" viewBox="0 0 22 22"><defs><linearGradient id="wta" x1="0" x2="1"><stop offset="0" stop-color="#7ab8ff"/><stop offset="1" stop-color="#0a3ad8"/></linearGradient><linearGradient id="wba" x1="0" y1="0" x2="1" y2="1"><stop offset=".4" stop-color="#fff"/><stop offset="1" stop-color="#dcdcf0"/></linearGradient></defs><rect x=".5" y="1.500" width="21" height="18" rx="1" fill="url(#wba)" stroke="#2a5ad4" stroke-width="1"/><rect x="0" y="1" width="22" height="3.400" rx="1" fill="url(#wta)"/><rect x="0" y="18.500" width="22" height="1.500" fill="#1a3cb4"/><rect x="4" y="6" width="3" height="3" fill="#f58a0a"/><rect x="8" y="8" width="2" height="1" fill="#8a8a8a"/><rect x="4" y="14" width="3" height="3" fill="#f58a0a"/><rect x="8" y="16" width="2" height="1" fill="#8a8a8a"/><rect x="12" y="6" width="3" height="3" fill="#f58a0a"/><rect x="16" y="8" width="2" height="1" fill="#8a8a8a"/><rect x="12" y="14" width="3" height="3" fill="#f58a0a"/><rect x="16" y="16" width="2" height="1" fill="#8a8a8a"/></svg><div class="abs" style="left:331px;top:94px;width:32px;height:32px;background:#8e8e8e;border:1px solid #505050;box-shadow:inset 1px 1px 0 #505050,inset -1px -1px 0 #fdfdfd"></div><svg class="abs" style="left:336px;top:99px" width="22" height="22" viewBox="0 0 22 22"><defs><linearGradient id="wtb" x1="0" x2="1"><stop offset="0" stop-color="#7ab8ff"/><stop offset="1" stop-color="#0a3ad8"/></linearGradient><linearGradient id="wbb" x1="0" y1="0" x2="1" y2="1"><stop offset=".4" stop-color="#fff"/><stop offset="1" stop-color="#dcdcf0"/></linearGradient></defs><rect x=".5" y="1.500" width="21" height="18" rx="1" fill="url(#wbb)" stroke="#2a5ad4" stroke-width="1"/><rect x="0" y="1" width="22" height="3.400" rx="1" fill="url(#wtb)"/><rect x="0" y="18.500" width="22" height="1.500" fill="#1a3cb4"/><rect x="4" y="7" width="3" height="3" fill="#f58a0a"/><rect x="8" y="9" width="2" height="1" fill="#8a8a8a"/><rect x="12" y="9" width="5" height="1" fill="#8a8a8a"/><rect x="4" y="14" width="3" height="3" fill="#f58a0a"/><rect x="8" y="16" width="2" height="1" fill="#8a8a8a"/><rect x="12" y="16" width="5" height="1" fill="#8a8a8a"/></svg><svg class="abs" style="left:369px;top:99px" width="22" height="22" viewBox="0 0 22 22"><path d="M.5 .5 H19.500 V15.500 L13.500 21.500 H.5z" fill="#fff" stroke="#8e8e8e"/><path d="M13.500 21.500 V15.500 H19.500z" fill="#f2f2f2" stroke="#8e8e8e" stroke-width=".8"/><defs><linearGradient id="ad" x1="0" x2="1"><stop offset="0" stop-color="#cfe0ff"/><stop offset=".4" stop-color="#3a7ae8"/><stop offset="1" stop-color="#1a50d0"/></linearGradient></defs><rect x="1" y="1" width="18" height="2" fill="url(#ad)"/><path d="M6 4.300 H10.800 V5.700 H6z M5.400 7.100 H13.200 V8.900 H5.400z M10 7 H13.200 V17 H10z M5.800 10.200 H10.600 V11.800 H5.800z M3.300 11.200 H6.500 V14.700 H3.300z M5.800 14.700 H13.200 V17.100 H5.800z" fill="#000"/></svg><div class="abs" style="left:396px;top:100px;width:1px;height:20px;background:#a2a2a2"></div><div class="abs" style="left:397px;top:100px;width:1px;height:20px;background:#f6f6f6"></div><div class="abs" style="left:464px;top:100px;width:1px;height:20px;background:#a2a2a2"></div><div class="abs" style="left:465px;top:100px;width:1px;height:20px;background:#f6f6f6"></div><div class="abs" style="left:500px;top:100px;width:1px;height:20px;background:#a2a2a2"></div><div class="abs" style="left:501px;top:100px;width:1px;height:20px;background:#f6f6f6"></div><svg class="abs" style="left:404px;top:99px" width="22" height="22" viewBox="0 0 22 22"><path d="M1.500 .5 H20.500 V15.500 L14.500 21.500 H1.500z" fill="#fff" stroke="#8e8e8e"/><path d="M14.500 21.500 V15.500 H20.500z" fill="#f4f4f4" stroke="#8e8e8e" stroke-width=".8"/><rect x="2" y="1" width="18" height="2.200" fill="#8686f6"/><rect x="2" y="1" width="6" height="2.200" fill="#c4c4ff"/><text x="3.500" y="17.500" font-family="Liberation Serif,serif" font-style="italic" font-weight="bold" font-size="22" fill="#7676fa">a</text><path d="M4.500 13.500 V21.500 M.5 17.500 H8.500" stroke="#128a12" stroke-width="3.400"/><path d="M4.500 14.500 V20.500 M1.500 17.500 H7.500" stroke="#7af04a" stroke-width="1.500"/></svg><svg class="abs" style="left:437px;top:99px" width="22" height="22" viewBox="0 0 22 22"><defs><linearGradient id="tg" x1="0" x2="1"><stop offset="0" stop-color="#f4f4f4"/><stop offset=".55" stop-color="#d0d0d0"/><stop offset="1" stop-color="#8e8e8e"/></linearGradient></defs><path d="M1 5 C1 1.500 19.500 1.500 19.500 5 L17 18.500 C15 22 5.500 22 3.500 18.500z" fill="url(#tg)" stroke="#111" stroke-width="1"/><ellipse cx="10.250" cy="5" rx="8.600" ry="3.300" fill="#e9e9e9" stroke="#222" stroke-width=".9"/><path d="M2 6.500 C5 10.500 15.500 10.500 18.500 6.500" fill="none" stroke="#4a86b8" stroke-width="1.300"/><path d="M3 4.500 C6 2.200 9 2.600 9.500 3 L8.500 8 M11 3 C14 2.400 16.500 3.400 17.500 4.500" fill="none" stroke="#222" stroke-width="1.100"/></svg><svg class="abs" style="left:472px;top:99px" width="22" height="22" viewBox="0 0 22 22"><g stroke-linecap="round" fill="none"><path d="M5.500 16.500 L16 6" stroke="#111" stroke-width="4.800"/><circle cx="17" cy="4.800" r="3.300" fill="#ececec" stroke="#111" stroke-width="1"/><circle cx="4.500" cy="17.500" r="3.300" fill="#ececec" stroke="#111" stroke-width="1"/><path d="M5.500 16.500 L16 6" stroke="#ececec" stroke-width="2.900"/><path d="M17.600 4.200 L21.500 .3" stroke="#e8e8e8" stroke-width="2.400" stroke-linecap="butt"/><path d="M3.900 18.100 L0 22" stroke="#e8e8e8" stroke-width="2.400" stroke-linecap="butt"/><path d="M2.800 1.800 L10 10.500" stroke="#111" stroke-width="3.200"/><path d="M2.800 1.800 L10 10.500" stroke="#d4d4d4" stroke-width="1.600"/><path d="M11 11.500 L18.500 19" stroke="#2a1a00" stroke-width="5.600"/><path d="M11 11.500 L18.500 19" stroke="#e4a212" stroke-width="3.800"/><path d="M11.800 10.800 L18 17" stroke="#fbe08a" stroke-width="1"/></g></svg><svg class="abs" style="left:508px;top:98px" width="22" height="22" viewBox="0 0 22 22"><defs><linearGradient id="pb" x1="0" y1="0" x2="1" y2="1"><stop offset="0" stop-color="#7ac8ff"/><stop offset="1" stop-color="#1464d8"/></linearGradient><linearGradient id="pw" x1="0" y1="0" x2="0" y2="1"><stop offset="0" stop-color="#f6f6f6"/><stop offset="1" stop-color="#9a9a9a"/></linearGradient></defs><path d="M6.500 1.500 H17.500 V9 H6.500z" fill="#f4f4f4" stroke="#111" stroke-width="1"/><path d="M8 4.500 H16 M8 6.500 H16" stroke="#b4b4b4" stroke-width="1.200"/><path d="M3.500 7.500 H19.500 C21.500 8.500 21.800 12 21.500 17 C21 20 18 20.500 16 20.500 H6 C3 20.500 1.200 19.500 1 17 C.7 12 1 8.500 3.500 7.500z" fill="url(#pw)" stroke="#111" stroke-width="1"/><path d="M4.500 9 H6.500 V9 H17.500 L19.500 13.500 H3.500z" fill="url(#pb)"/><path d="M6.500 9.200 H17.300 L18 11 C12 12 8 10 6.500 9.200z" fill="#bfe4ff" opacity=".6"/><rect x="3.500" y="14" width="2" height="1.800" fill="#2aa02a"/><rect x="5.500" y="14" width="2" height="1.800" fill="#e82a2a"/><path d="M3 17.500 H19.500" stroke="#fff" stroke-width="1"/></svg><div class="abs serif nw" style="left:540px;top:92px;font-size:32px;line-height:34px;font-weight:bold;font-style:italic">T</div><div id="list" class="abs sunk"><div class="lrow" style="top:10px"><div class="n" style="background:#e7e7e7"></div><div class="s" style="background:#f1f1f1"></div><svg class="abs" style="left:1px;top:1px" width="16" height="16" viewBox="0 0 16 16"><path d="M.5 .5 H14.500 V11.500 L10.500 15.500 H.5z" fill="#fff" stroke="#8e8e8e"/><path d="M10.500 15.500 V11.500 H14.500" fill="#e8e8e8" stroke="#8e8e8e" stroke-width=".8"/><rect x="1.500" y="1.500" width="12" height="1.800" fill="#f0282a"/><rect x="1.500" y="1.500" width="3" height="1.800" fill="#f88a8a"/><text x="1" y="13.200" font-family="Liberation Serif,serif" font-style="italic" font-weight="bold" font-size="18" fill="#ee1c1c" transform="translate(0 2.600) scale(1.050 .8)">a</text></svg><div class="tx" style="left:19px;color:#000;letter-spacing:0.05px">Nimbus Roman No9 L, Курсив</div><div class="tx sz" style="left:308px;color:#000">137.778</div></div><div class="lrow" style="top:28px"><div class="n" style="background:#f3f3f3"></div><div class="s" style="background:#ffffff"></div><svg class="abs" style="left:1px;top:1px" width="16" height="16" viewBox="0 0 16 16"><path d="M.5 .5 H14.500 V11.500 L10.500 15.500 H.5z" fill="#fff" stroke="#8e8e8e"/><path d="M10.500 15.500 V11.500 H14.500" fill="#e8e8e8" stroke="#8e8e8e" stroke-width=".8"/><rect x="1.500" y="1.500" width="12" height="1.800" fill="#f0282a"/><rect x="1.500" y="1.500" width="3" height="1.800" fill="#f88a8a"/><text x="1" y="13.200" font-family="Liberation Serif,serif" font-style="italic" font-weight="bold" font-size="18" fill="#ee1c1c" transform="translate(0 2.600) scale(1.050 .8)">a</text></svg><div class="tx" style="left:19px;color:#000;letter-spacing:-0.071px">Nimbus Sans L</div><div class="tx sz" style="left:308px;color:#000">149.238</div></div><div class="lrow" style="top:46px"><div class="n" style="background:#e7e7e7"></div><div class="s" style="background:#f1f1f1"></div><svg class="abs" style="left:1px;top:1px" width="16" height="16" viewBox="0 0 16 16"><path d="M.5 .5 H14.500 V11.500 L10.500 15.500 H.5z" fill="#fff" stroke="#8e8e8e"/><path d="M10.500 15.500 V11.500 H14.500" fill="#e8e8e8" stroke="#8e8e8e" stroke-width=".8"/><rect x="1.500" y="1.500" width="12" height="1.800" fill="#f0282a"/><rect x="1.500" y="1.500" width="3" height="1.800" fill="#f88a8a"/><text x="1" y="13.200" font-family="Liberation Serif,serif" font-style="italic" font-weight="bold" font-size="18" fill="#ee1c1c" transform="translate(0 2.600) scale(1.050 .8)">a</text></svg><div class="tx" style="left:19px;color:#000;letter-spacing:0.023px">Nimbus Sans L Condensed</div><div class="tx sz" style="left:308px;color:#000">133.307</div></div><div class="lrow" style="top:64px"><div class="n" style="background:#f3f3f3"></div><div class="s" style="background:#ffffff"></div><svg class="abs" style="left:1px;top:1px" width="16" height="16" viewBox="0 0 16 16"><path d="M.5 .5 H14.500 V11.500 L10.500 15.500 H.5z" fill="#fff" stroke="#8e8e8e"/><path d="M10.500 15.500 V11.500 H14.500" fill="#e8e8e8" stroke="#8e8e8e" stroke-width=".8"/><rect x="1.500" y="1.500" width="12" height="1.800" fill="#f0282a"/><rect x="1.500" y="1.500" width="3" height="1.800" fill="#f88a8a"/><text x="1" y="13.200" font-family="Liberation Serif,serif" font-style="italic" font-weight="bold" font-size="18" fill="#ee1c1c" transform="translate(0 2.600) scale(1.050 .8)">a</text></svg><div class="tx" style="left:19px;color:#000;letter-spacing:0.048px">Nimbus Sans L Condensed, Жирный</div><div class="tx sz" style="left:308px;color:#000">134.830</div></div><div class="lrow" style="top:82px"><div class="n" style="background:#e7e7e7"></div><div class="s" style="background:#f1f1f1"></div><svg class="abs" style="left:1px;top:1px" width="16" height="16" viewBox="0 0 16 16"><path d="M.5 .5 H14.500 V11.500 L10.500 15.500 H.5z" fill="#fff" stroke="#8e8e8e"/><path d="M10.500 15.500 V11.500 H14.500" fill="#e8e8e8" stroke="#8e8e8e" stroke-width=".8"/><rect x="1.500" y="1.500" width="12" height="1.800" fill="#f0282a"/><rect x="1.500" y="1.500" width="3" height="1.800" fill="#f88a8a"/><text x="1" y="13.200" font-family="Liberation Serif,serif" font-style="italic" font-weight="bold" font-size="18" fill="#ee1c1c" transform="translate(0 2.600) scale(1.050 .8)">a</text></svg><div class="tx" style="left:19px;color:#000;letter-spacing:0.056px">Nimbus Sans L Condensed, Жирный Курсив</div><div class="tx sz" style="left:308px;color:#000">141.230</div></div><div class="lrow" style="top:100px"><div class="n" style="background:#f3f3f3"></div><div class="s" style="background:#ffffff"></div><svg class="abs" style="left:1px;top:1px" width="16" height="16" viewBox="0 0 16 16"><path d="M.5 .5 H14.500 V11.500 L10.500 15.500 H.5z" fill="#fff" stroke="#8e8e8e"/><path d="M10.500 15.500 V11.500 H14.500" fill="#e8e8e8" stroke="#8e8e8e" stroke-width=".8"/><rect x="1.500" y="1.500" width="12" height="1.800" fill="#f0282a"/><rect x="1.500" y="1.500" width="3" height="1.800" fill="#f88a8a"/><text x="1" y="13.200" font-family="Liberation Serif,serif" font-style="italic" font-weight="bold" font-size="18" fill="#ee1c1c" transform="translate(0 2.600) scale(1.050 .8)">a</text></svg><div class="tx" style="left:19px;color:#000;letter-spacing:0.021px">Nimbus Sans L Condensed, Курсив</div><div class="tx sz" style="left:308px;color:#000">134.289</div></div><div class="lrow" style="top:118px"><div class="n" style="background:#e7e7e7"></div><div class="s" style="background:#f1f1f1"></div><svg class="abs" style="left:1px;top:1px" width="16" height="16" viewBox="0 0 16 16"><path d="M.5 .5 H14.500 V11.500 L10.500 15.500 H.5z" fill="#fff" stroke="#8e8e8e"/><path d="M10.500 15.500 V11.500 H14.500" fill="#e8e8e8" stroke="#8e8e8e" stroke-width=".8"/><rect x="1.500" y="1.500" width="12" height="1.800" fill="#f0282a"/><rect x="1.500" y="1.500" width="3" height="1.800" fill="#f88a8a"/><text x="1" y="13.200" font-family="Liberation Serif,serif" font-style="italic" font-weight="bold" font-size="18" fill="#ee1c1c" transform="translate(0 2.600) scale(1.050 .8)">a</text></svg><div class="tx" style="left:19px;color:#000;letter-spacing:0.021px">Nimbus Sans L, Жирный</div><div class="tx sz" style="left:308px;color:#000">147.468</div></div><div class="lrow" style="top:136px"><div class="n" style="background:#f3f3f3"></div><div class="s" style="background:#ffffff"></div><svg class="abs" style="left:1px;top:1px" width="16" height="16" viewBox="0 0 16 16"><path d="M.5 .5 H14.500 V11.500 L10.500 15.500 H.5z" fill="#fff" stroke="#8e8e8e"/><path d="M10.500 15.500 V11.500 H14.500" fill="#e8e8e8" stroke="#8e8e8e" stroke-width=".8"/><rect x="1.500" y="1.500" width="12" height="1.800" fill="#f0282a"/><rect x="1.500" y="1.500" width="3" height="1.800" fill="#f88a8a"/><text x="1" y="13.200" font-family="Liberation Serif,serif" font-style="italic" font-weight="bold" font-size="18" fill="#ee1c1c" transform="translate(0 2.600) scale(1.050 .8)">a</text></svg><div class="tx" style="left:19px;color:#000;letter-spacing:0.038px">Nimbus Sans L, Жирный Курсив</div><div class="tx sz" style="left:308px;color:#000">145.030</div></div><div class="lrow" style="top:154px"><div class="n" style="background:#e7e7e7"></div><div class="s" style="background:#f1f1f1"></div><svg class="abs" style="left:1px;top:1px" width="16" height="16" viewBox="0 0 16 16"><path d="M.5 .5 H14.500 V11.500 L10.500 15.500 H.5z" fill="#fff" stroke="#8e8e8e"/><path d="M10.500 15.500 V11.500 H14.500" fill="#e8e8e8" stroke="#8e8e8e" stroke-width=".8"/><rect x="1.500" y="1.500" width="12" height="1.800" fill="#f0282a"/><rect x="1.500" y="1.500" width="3" height="1.800" fill="#f88a8a"/><text x="1" y="13.200" font-family="Liberation Serif,serif" font-style="italic" font-weight="bold" font-size="18" fill="#ee1c1c" transform="translate(0 2.600) scale(1.050 .8)">a</text></svg><div class="tx" style="left:19px;color:#000;letter-spacing:0.001px">Nimbus Sans L, Курсив</div><div class="tx sz" style="left:308px;color:#000">149.480</div></div><div class="lrow" style="top:172px"><div class="n" style="background:#f3f3f3"></div><div class="s" style="background:#ffffff"></div><svg class="abs" style="left:1px;top:1px" width="16" height="16" viewBox="0 0 16 16"><path d="M.5 .5 H14.500 V11.500 L10.500 15.500 H.5z" fill="#fff" stroke="#8e8e8e"/><path d="M10.500 15.500 V11.500 H14.500" fill="#e8e8e8" stroke="#8e8e8e" stroke-width=".8"/><rect x="1.500" y="1.500" width="12" height="1.800" fill="#f0282a"/><rect x="1.500" y="1.500" width="3" height="1.800" fill="#f88a8a"/><text x="1" y="13.200" font-family="Liberation Serif,serif" font-style="italic" font-weight="bold" font-size="18" fill="#ee1c1c" transform="translate(0 2.600) scale(1.050 .8)">a</text></svg><div class="tx" style="left:19px;color:#000;letter-spacing:0.061px">Standard Symbols L</div><div class="tx sz" style="left:308px;color:#000">43.395</div></div><div class="lrow" style="top:190px"><div class="n" style="background:#e7e7e7"></div><div class="s" style="background:#f1f1f1"></div><svg class="abs" style="left:1px;top:1px" width="16" height="16" viewBox="0 0 16 16"><path d="M.5 .5 H14.500 V11.500 L10.500 15.500 H.5z" fill="#fff" stroke="#8e8e8e"/><path d="M10.500 15.500 V11.500 H14.500" fill="#e8e8e8" stroke="#8e8e8e" stroke-width=".8"/><rect x="1.500" y="1.400" width="12" height="1.300" fill="#3a7ae0"/><rect x="1.500" y="1.400" width="4" height="1.300" fill="#a8c8ff"/><text x="2" y="12.300" font-family="Liberation Serif,serif" font-weight="bold" font-size="11.500" fill="#e8201a">T</text><text x="7.300" y="13" font-family="Liberation Serif,serif" font-weight="bold" font-size="9.500" fill="#283838">T</text></svg><div class="tx" style="left:19px;color:#000;letter-spacing:0.262px">Tahoma, Жирный</div><div class="tx sz" style="left:308px;color:#000">355.436</div></div><div class="lrow" style="top:208px"><div class="n" style="background:#f3f3f3"></div><div class="s" style="background:#ffffff"></div><svg class="abs" style="left:1px;top:1px" width="16" height="16" viewBox="0 0 16 16"><path d="M.5 .5 H14.500 V11.500 L10.500 15.500 H.5z" fill="#fff" stroke="#8e8e8e"/><path d="M10.500 15.500 V11.500 H14.500" fill="#e8e8e8" stroke="#8e8e8e" stroke-width=".8"/><rect x="1.500" y="1.400" width="12" height="1.300" fill="#3a7ae0"/><rect x="1.500" y="1.400" width="4" height="1.300" fill="#a8c8ff"/><text x="2" y="12.300" font-family="Liberation Serif,serif" font-weight="bold" font-size="11.500" fill="#e8201a">T</text><text x="7.300" y="13" font-family="Liberation Serif,serif" font-weight="bold" font-size="9.500" fill="#283838">T</text></svg><div class="tx" style="left:19px;color:#000;letter-spacing:0.189px">Times New Roman</div><div class="tx sz" style="left:308px;color:#000">409.280</div></div><div class="lrow" style="top:226px"><div class="n" style="background:#e7e7e7"></div><div class="s" style="background:#f1f1f1"></div><svg class="abs" style="left:1px;top:1px" width="16" height="16" viewBox="0 0 16 16"><path d="M.5 .5 H14.500 V11.500 L10.500 15.500 H.5z" fill="#fff" stroke="#8e8e8e"/><path d="M10.500 15.500 V11.500 H14.500" fill="#e8e8e8" stroke="#8e8e8e" stroke-width=".8"/><rect x="1.500" y="1.400" width="12" height="1.300" fill="#3a7ae0"/><rect x="1.500" y="1.400" width="4" height="1.300" fill="#a8c8ff"/><text x="2" y="12.300" font-family="Liberation Serif,serif" font-weight="bold" font-size="11.500" fill="#e8201a">T</text><text x="7.300" y="13" font-family="Liberation Serif,serif" font-weight="bold" font-size="9.500" fill="#283838">T</text></svg><div class="tx" style="left:19px;color:#000;letter-spacing:0.182px">Times New Roman, Жирный</div><div class="tx sz" style="left:308px;color:#000">398.372</div></div><div class="lrow" style="top:244px"><div class="n" style="background:#4a58a6"></div><div class="s" style="background:#4a58a6"></div><div class="abs" style="left:0;top:0;width:354px;height:18px;border:1px dotted #000"></div><svg class="abs" style="left:1px;top:1px" width="16" height="16" viewBox="0 0 16 16"><path d="M.5 .5 H14.500 V11.500 L10.500 15.500 H.5z" fill="#fff" stroke="#8e8e8e"/><path d="M10.500 15.500 V11.500 H14.500" fill="#e8e8e8" stroke="#8e8e8e" stroke-width=".8"/><rect x="1.500" y="1.400" width="12" height="1.300" fill="#3a7ae0"/><rect x="1.500" y="1.400" width="4" height="1.300" fill="#a8c8ff"/><text x="2" y="12.300" font-family="Liberation Serif,serif" font-weight="bold" font-size="11.500" fill="#e8201a">T</text><text x="7.300" y="13" font-family="Liberation Serif,serif" font-weight="bold" font-size="9.500" fill="#283838">T</text></svg><div class="tx" style="left:19px;color:#fff;letter-spacing:0.148px">Times New Roman, Жирный Курсив</div><div class="tx sz" style="left:308px;color:#fff">239.692</div></div><div class="lrow" style="top:262px"><div class="n" style="background:#e7e7e7"></div><div class="s" style="background:#f1f1f1"></div><svg class="abs" style="left:1px;top:1px" width="16" height="16" viewBox="0 0 16 16"><path d="M.5 .5 H14.500 V11.500 L10.500 15.500 H.5z" fill="#fff" stroke="#8e8e8e"/><path d="M10.500 15.500 V11.500 H14.500" fill="#e8e8e8" stroke="#8e8e8e" stroke-width=".8"/><rect x="1.500" y="1.400" width="12" height="1.300" fill="#3a7ae0"/><rect x="1.500" y="1.400" width="4" height="1.300" fill="#a8c8ff"/><text x="2" y="12.300" font-family="Liberation Serif,serif" font-weight="bold" font-size="11.500" fill="#e8201a">T</text><text x="7.300" y="13" font-family="Liberation Serif,serif" font-weight="bold" font-size="9.500" fill="#283838">T</text></svg><div class="tx" style="left:19px;color:#000;letter-spacing:0.164px">Times New Roman, Курсив</div><div class="tx sz" style="left:308px;color:#000">248.368</div></div><div class="lrow" style="top:280px"><div class="n" style="background:#f3f3f3"></div><div class="s" style="background:#ffffff"></div><svg class="abs" style="left:1px;top:1px" width="16" height="16" viewBox="0 0 16 16"><path d="M.5 .5 H14.500 V11.500 L10.500 15.500 H.5z" fill="#fff" stroke="#8e8e8e"/><path d="M10.500 15.500 V11.500 H14.500" fill="#e8e8e8" stroke="#8e8e8e" stroke-width=".8"/><rect x="1.500" y="1.500" width="12" height="1.800" fill="#f0282a"/><rect x="1.500" y="1.500" width="3" height="1.800" fill="#f88a8a"/><text x="1" y="13.200" font-family="Liberation Serif,serif" font-style="italic" font-weight="bold" font-size="18" fill="#ee1c1c" transform="translate(0 2.600) scale(1.050 .8)">a</text></svg><div class="tx" style="left:19px;color:#000;letter-spacing:0.045px">URW Bookman L</div><div class="tx sz" style="left:308px;color:#000">192.961</div></div><div class="lrow" style="top:298px"><div class="n" style="background:#e7e7e7"></div><div class="s" style="background:#f1f1f1"></div><svg class="abs" style="left:1px;top:1px" width="16" height="16" viewBox="0 0 16 16"><path d="M.5 .5 H14.500 V11.500 L10.500 15.500 H.5z" fill="#fff" stroke="#8e8e8e"/><path d="M10.500 15.500 V11.500 H14.500" fill="#e8e8e8" stroke="#8e8e8e" stroke-width=".8"/><rect x="1.500" y="1.500" width="12" height="1.800" fill="#f0282a"/><rect x="1.500" y="1.500" width="3" height="1.800" fill="#f88a8a"/><text x="1" y="13.200" font-family="Liberation Serif,serif" font-style="italic" font-weight="bold" font-size="18" fill="#ee1c1c" transform="translate(0 2.600) scale(1.050 .8)">a</text></svg><div class="tx" style="left:19px;color:#000;letter-spacing:0.111px">URW Bookman L, Жирный</div><div class="tx sz" style="left:308px;color:#000">231.001</div></div><div class="lrow" style="top:316px"><div class="n" style="background:#f3f3f3"></div><div class="s" style="background:#ffffff"></div><svg class="abs" style="left:1px;top:1px" width="16" height="16" viewBox="0 0 16 16"><path d="M.5 .5 H14.500 V11.500 L10.500 15.500 H.5z" fill="#fff" stroke="#8e8e8e"/><path d="M10.500 15.500 V11.500 H14.500" fill="#e8e8e8" stroke="#8e8e8e" stroke-width=".8"/><rect x="1.500" y="1.500" width="12" height="1.800" fill="#f0282a"/><rect x="1.500" y="1.500" width="3" height="1.800" fill="#f88a8a"/><text x="1" y="13.200" font-family="Liberation Serif,serif" font-style="italic" font-weight="bold" font-size="18" fill="#ee1c1c" transform="translate(0 2.600) scale(1.050 .8)">a</text></svg><div class="tx" style="left:19px;color:#000;letter-spacing:0.078px">URW Bookman L, Жирный Курсив</div><div class="tx sz" style="left:308px;color:#000">157.603</div></div><div class="lrow" style="top:334px"><div class="n" style="background:#e7e7e7"></div><div class="s" style="background:#f1f1f1"></div><svg class="abs" style="left:1px;top:1px" width="16" height="16" viewBox="0 0 16 16"><path d="M.5 .5 H14.500 V11.500 L10.500 15.500 H.5z" fill="#fff" stroke="#8e8e8e"/><path d="M10.500 15.500 V11.500 H14.500" fill="#e8e8e8" stroke="#8e8e8e" stroke-width=".8"/><rect x="1.500" y="1.500" width="12" height="1.800" fill="#f0282a"/><rect x="1.500" y="1.500" width="3" height="1.800" fill="#f88a8a"/><text x="1" y="13.200" font-family="Liberation Serif,serif" font-style="italic" font-weight="bold" font-size="18" fill="#ee1c1c" transform="translate(0 2.600) scale(1.050 .8)">a</text></svg><div class="tx" style="left:19px;color:#000;letter-spacing:0.072px">URW Bookman L, Курсив</div><div class="tx sz" style="left:308px;color:#000">192.416</div></div><div class="lrow" style="top:352px"><div class="n" style="background:#f3f3f3"></div><div class="s" style="background:#ffffff"></div><svg class="abs" style="left:1px;top:1px" width="16" height="16" viewBox="0 0 16 16"><path d="M.5 .5 H14.500 V11.500 L10.500 15.500 H.5z" fill="#fff" stroke="#8e8e8e"/><path d="M10.500 15.500 V11.500 H14.500" fill="#e8e8e8" stroke="#8e8e8e" stroke-width=".8"/><rect x="1.500" y="1.500" width="12" height="1.800" fill="#f0282a"/><rect x="1.500" y="1.500" width="3" height="1.800" fill="#f88a8a"/><text x="1" y="13.200" font-family="Liberation Serif,serif" font-style="italic" font-weight="bold" font-size="18" fill="#ee1c1c" transform="translate(0 2.600) scale(1.050 .8)">a</text></svg><div class="tx" style="left:19px;color:#000;letter-spacing:0.13px">URW Chancery L, Medium Курсив</div><div class="tx sz" style="left:308px;color:#000">211.053</div></div><div class="lrow" style="top:370px"><div class="n" style="background:#e7e7e7"></div><div class="s" style="background:#f1f1f1"></div><svg class="abs" style="left:1px;top:1px" width="16" height="16" viewBox="0 0 16 16"><path d="M.5 .5 H14.500 V11.500 L10.500 15.500 H.5z" fill="#fff" stroke="#8e8e8e"/><path d="M10.500 15.500 V11.500 H14.500" fill="#e8e8e8" stroke="#8e8e8e" stroke-width=".8"/><rect x="1.500" y="1.500" width="12" height="1.800" fill="#f0282a"/><rect x="1.500" y="1.500" width="3" height="1.800" fill="#f88a8a"/><text x="1" y="13.200" font-family="Liberation Serif,serif" font-style="italic" font-weight="bold" font-size="18" fill="#ee1c1c" transform="translate(0 2.600) scale(1.050 .8)">a</text></svg><div class="tx" style="left:19px;color:#000;letter-spacing:0.005px">URW Gothic L</div><div class="tx sz" style="left:308px;color:#000">136.201</div></div><div class="lrow" style="top:388px"><div class="n" style="background:#f3f3f3"></div><div class="s" style="background:#ffffff"></div><svg class="abs" style="left:1px;top:1px" width="16" height="16" viewBox="0 0 16 16"><path d="M.5 .5 H14.500 V11.500 L10.500 15.500 H.5z" fill="#fff" stroke="#8e8e8e"/><path d="M10.500 15.500 V11.500 H14.500" fill="#e8e8e8" stroke="#8e8e8e" stroke-width=".8"/><rect x="1.500" y="1.500" width="12" height="1.800" fill="#f0282a"/><rect x="1.500" y="1.500" width="3" height="1.800" fill="#f88a8a"/><text x="1" y="13.200" font-family="Liberation Serif,serif" font-style="italic" font-weight="bold" font-size="18" fill="#ee1c1c" transform="translate(0 2.600) scale(1.050 .8)">a</text></svg><div class="tx" style="left:19px;color:#000;letter-spacing:0.125px">URW Gothic L, Oblique</div><div class="tx sz" style="left:308px;color:#000">137.551</div></div><div class="abs" style="left:0;top:0;width:354px;height:22px;background:#949494"></div><div class="abs" style="left:1px;top:1px;width:305px;height:21px;background:#e8e8e8;border:1px solid;border-color:#fff #8a8a8a #8a8a8a #fff"></div><div class="abs" style="left:306px;top:1px;width:60px;height:21px;background:#e8e8e8;border:1px solid;border-color:#fff #8a8a8a #8a8a8a #fff"></div><div class="abs sans b nw ui" style="left:6px;top:3px;font-size:13px;line-height:16px;letter-spacing:.2px">Имя</div><div class="abs" style="left:45px;top:10px;width:10px;height:8px"><svg class="abs" style="left:0.5px;top:0.5px" width="7.2" height="5.2"><path d="M0 1 L1 0 L2.600 0 L3.500 1 L4.400 0 L6 0 L7 1 L7 1.800 L4 5 L3 5 L0 1.800Z" fill="#000"/></svg></div><div class="abs sans b nw ui" style="left:311px;top:3px;font-size:13px;line-height:16px;letter-spacing:.9px">Размер</div><div class="abs sb" style="left:353px;top:0;width:16px;height:398px;border-right:1px solid #9c9c9c"></div><div class="abs sbtn" style="left:353px;top:0;width:15px;height:15px"><svg class="abs" style="left:3.0px;top:4.0px" width="7.2" height="5.2"><path d="M0 1 L1 0 L2.600 0 L3.500 1 L4.400 0 L6 0 L7 1 L7 1.800 L4 5 L3 5 L0 1.800Z" fill="#000" transform="translate(0 5) scale(1 -1)"/></svg></div><div class="abs sbtn" style="left:353px;top:383px;width:15px;height:15px"><svg class="abs" style="left:3.0px;top:4.0px" width="7.2" height="5.2"><path d="M0 1 L1 0 L2.600 0 L3.500 1 L4.400 0 L6 0 L7 1 L7 1.800 L4 5 L3 5 L0 1.800Z" fill="#000"/></svg></div><div class="abs thumb" style="left:353px;top:240px;width:15px;height:89px"><svg class="abs" style="left:4px;top:35px" width="8" height="18"><path d="M0.5 7.5 l6 -6" stroke="#fff" stroke-width="1"/><path d="M0.5 6.5 l6 -6" stroke="#8e8e8e" stroke-width="1"/><path d="M0.5 12.5 l6 -6" stroke="#fff" stroke-width="1"/><path d="M0.5 11.5 l6 -6" stroke="#8e8e8e" stroke-width="1"/><path d="M0.5 17.5 l6 -6" stroke="#fff" stroke-width="1"/><path d="M0.5 16.5 l6 -6" stroke="#8e8e8e" stroke-width="1"/></svg></div><div class="abs" style="left:0;top:398px;width:369px;height:15px;background:#c3c3c3;border-top:1px solid #9c9c9c"></div><div class="abs sbtn" style="left:0;top:398px;width:15px;height:15px"><svg class="abs" style="left:4.0px;top:3.0px" width="5.2" height="7.2"><path d="M0 1 L1 0 L2.600 0 L3.500 1 L4.400 0 L6 0 L7 1 L7 1.800 L4 5 L3 5 L0 1.800Z" fill="#000" transform="translate(5 0) rotate(90)"/></svg></div><div class="abs thumb" style="left:14px;top:398px;width:197px;height:15px"><svg class="abs" style="left:87px;top:3px" width="18" height="8"><path d="M1.5 6.5 l6 -6" stroke="#fff" stroke-width="1"/><path d="M0.5 6.5 l6 -6" stroke="#8e8e8e" stroke-width="1"/><path d="M6.5 6.5 l6 -6" stroke="#fff" stroke-width="1"/><path d="M5.5 6.5 l6 -6" stroke="#8e8e8e" stroke-width="1"/><path d="M11.5 6.5 l6 -6" stroke="#fff" stroke-width="1"/><path d="M10.5 6.5 l6 -6" stroke="#8e8e8e" stroke-width="1"/></svg></div><div class="abs sbtn" style="left:338px;top:398px;width:15px;height:15px"><svg class="abs" style="left:4.0px;top:3.0px" width="5.2" height="7.2"><path d="M0 1 L1 0 L2.600 0 L3.500 1 L4.400 0 L6 0 L7 1 L7 1.800 L4 5 L3 5 L0 1.800Z" fill="#000" transform="translate(0 7) rotate(-90)"/></svg></div><div class="abs" style="left:353px;top:398px;width:16px;height:15px;background:#e8e8e8"></div></div><div id="prev" class="abs" style="border:1px solid;border-color:#8c8c8c #fff #fff #8c8c8c"><div class="abs sans b nw ui" style="left:4px;top:2px;font-size:13px;line-height:16px;letter-spacing:.1px">Times New Roman, Жирный Курсив</div><div class="abs" style="left:4px;top:19px;width:393px;height:1px;background:#000"></div><div class="abs" style="left:4px;top:109px;width:393px;height:1px;background:#000"></div><div class="ln" style="left:4px;top:21.40px;font-size:24px;line-height:29px;">абвгдежзийклмнопрстуфхцчшщъыьэюя</div><div class="ln" style="left:4px;top:52.40px;font-size:24px;line-height:29px;">АБВГДЕЖЗИЙКЛМНОПРСТУФХЦЧШЩЪЫЬЭЮЯ</div><div class="ln" style="left:4px;top:78.80px;font-size:24px;line-height:29px;">0123456789.:,;(*!?'/\")£$€%^&amp;-+@~#&lt;&gt;{}[]</div><div class="ln" style="left:4px;top:114.90px;font-size:10.67px;line-height:13px;font-weight:normal;letter-spacing:.66px">Широкая электрификация южных губерний даст мощный толчок подъёму сельского хозяйства</div><div class="ln" style="left:4px;top:126.80px;font-size:13.33px;line-height:16px;letter-spacing:-.07px">Широкая электрификация южных губерний даст мощный толчок подъёму сельского хозяйства</div><div class="ln" style="left:4px;top:143.10px;font-size:16px;line-height:19px;">Широкая электрификация южных губерний даст мощный толчок подъёму сельского хозяйства</div><div class="ln" style="left:3.5px;top:157.50px;font-size:32px;line-height:38px;">Широкая электрификация южных губерний даст мощный толчок подъёму сельского хозяйства</div><div class="ln" style="left:2.5px;top:185.80px;font-size:48px;line-height:58px;">Широкая электрификация южных губерний даст мощный толчок подъёму сельского хозяйства</div><div class="ln" style="left:2px;top:229.90px;font-size:64px;line-height:77px;">Широкая электрификация южных губерний даст мощный толчок подъёму сельского хозяйства</div><div class="ln" style="left:2px;top:285.20px;font-size:85.33px;line-height:102px;">Широкая электрификация южных губерний даст мощный толчок подъёму сельского хозяйства</div></div><div class="abs btn" style="left:267px;top:548px;width:168px;height:30px"><svg class="abs" style="left:9px;top:6px" width="16" height="16" viewBox="0 0 16 16"><path d="M1.500 .5 H15.500 V11.500 L11.500 15.500 H1.500z" fill="#fff" stroke="#a0a0a0"/><path d="M11.500 15.500 V11.500 H15.500" fill="#ececec" stroke="#a0a0a0" stroke-width=".8"/><rect x="2.500" y="1.300" width="12" height="1.800" fill="#8c8cf4"/><rect x="2.500" y="1.300" width="4" height="1.800" fill="#c8c8ff"/><text x="3" y="13" font-family="Liberation Serif,serif" font-style="italic" font-weight="bold" font-size="19" fill="#7272f6" transform="translate(0 2.600) scale(1 .8)">a</text><path d="M3.500 9.300 V15.700 M.3 12.500 H6.700" stroke="#107a10" stroke-width="3.200"/><path d="M3.500 10.300 V14.700 M1.300 12.500 H5.700" stroke="#7af04a" stroke-width="1.300"/></svg><span class="lbl" style="left:22px;top:6px;letter-spacing:.09px">Добавить шрифты...</span></div><div class="abs sunk" style="left:267px;top:584px;width:779px;height:17px"></div><div class="abs sans b nw ui" style="left:272px;top:585px;font-size:13px;line-height:16px;letter-spacing:.03px">85 шрифтов (14,5 МБ всего) - 28 семейств</div><div class="abs" style="left:267px;top:607px;width:779px;height:1px;background:#a0a0a0"></div><div class="abs" style="left:267px;top:608px;width:779px;height:1px;background:#fbfbfb"></div><div class="abs btn dis" style="left:267px;top:615px;width:90px;height:30px"><svg class="abs" style="left:5.5px;top:6.5px" width="15" height="15" viewBox="0 0 16 16"><circle cx="2.4" cy="2.4" r="1.500" fill="#c4c4c4" stroke="#8c8c8c" stroke-width=".8"/><circle cx="2.4" cy="13.6" r="1.500" fill="#c4c4c4" stroke="#8c8c8c" stroke-width=".8"/><circle cx="13.6" cy="2.4" r="1.500" fill="#c4c4c4" stroke="#8c8c8c" stroke-width=".8"/><circle cx="13.6" cy="13.6" r="1.500" fill="#c4c4c4" stroke="#8c8c8c" stroke-width=".8"/><circle cx="8" cy="8" r="7.500" fill="#8c8c8c"/><circle cx="8" cy="8" r="4.400" fill="none" stroke="#e4e4e4" stroke-width="4.200"/><circle cx="8" cy="8" r="4.400" fill="none" stroke="#b0b0b0" stroke-width="4.200" stroke-dasharray="4.285 2.626" stroke-dashoffset="2.143"/><circle cx="8" cy="8" r="2.200" fill="#fff" stroke="#8c8c8c" stroke-width="1"/></svg><span class="lbl" style="left:28px;top:6px"><u>С</u>правка</span></div><div class="abs btn dis" style="left:363px;top:615px;width:110px;height:30px"><span class="lbl" style="left:7px;top:6px">По <u>у</u>молчанию</span></div><div class="abs btn" style="left:758px;top:615px;width:85px;height:30px"><svg class="abs" style="left:22px;top:7px" width="14" height="14" viewBox="0 0 16 16"><path d="M3 9 L6.500 13 L13 3.500" fill="none" stroke="#0e3e10" stroke-width="4.200" stroke-linecap="round" stroke-linejoin="round"/><path d="M3 9 L6.500 13 L13 3.500" fill="none" stroke="#35b53b" stroke-width="2.300" stroke-linecap="round" stroke-linejoin="round"/><path d="M3.300 8.700 L6.300 11.800" fill="none" stroke="#9fe8a2" stroke-width=".9" stroke-linecap="round"/></svg><span class="lbl" style="left:44px;top:6px"><u>О</u>К</span></div><div class="abs btn dis" style="left:849px;top:615px;width:106px;height:30px"><svg class="abs" style="left:4px;top:5px" width="18" height="16" viewBox="0 0 18 16"><path d="M3 8 L7 12.500 L15.500 3" fill="none" stroke="#a8a8a8" stroke-width="3.800" stroke-linecap="round" stroke-linejoin="round"/><path d="M3 8 L7 12.500 L15.500 3" fill="none" stroke="#d0d0d0" stroke-width="1.900" stroke-linecap="round" stroke-linejoin="round"/></svg><span class="lbl" style="left:27px;top:6px"><u>П</u>рименить</span></div><div class="abs btn" style="left:961px;top:615px;width:85px;height:30px"><svg class="abs" style="left:7px;top:7px" width="14" height="14" viewBox="0 0 16 16"><path d="M4 4 L12 12 M12 4 L4 12" stroke="#6a0a06" stroke-width="5" stroke-linecap="round"/><path d="M4 4 L12 12 M12 4 L4 12" stroke="#e8281e" stroke-width="3.200" stroke-linecap="round"/><path d="M4 4.200 L6.500 6.600 M11.700 4.200 L9.500 6.400" stroke="#ff9a90" stroke-width="1" stroke-linecap="round"/></svg><span class="lbl" style="left:28px;top:6px">О<u>т</u>мена</span></div>
</div>
</body></html>
